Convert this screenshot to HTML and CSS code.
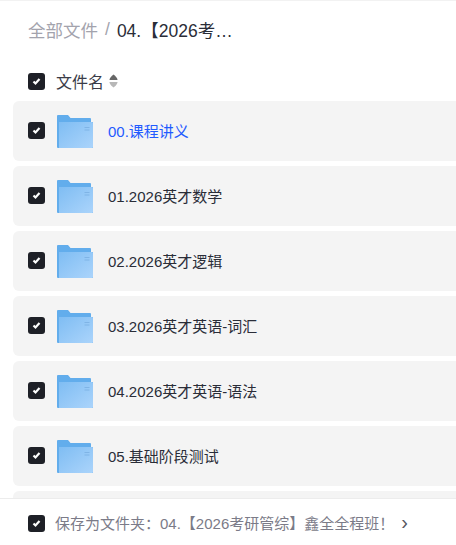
FILE: index.html
```html
<!DOCTYPE html>
<html lang="zh-CN">
<head>
  <meta charset="UTF-8" />
  <meta name="viewport" content="width=device-width, initial-scale=1.0" />
  <title>保存为文件夹</title>
  <link rel="stylesheet" href="styles.css">
</head>
<body>

<svg width="0" height="0" class="defs">
  <defs>
    <linearGradient id="folderFront" x1="0" y1="0" x2="1" y2="1">
      <stop offset="0" stop-color="#7fbdf3" />
      <stop offset="1" stop-color="#abd4fb" />
    </linearGradient>
    <symbol id="folder" viewBox="0 0 36 33">
      <path d="M0 1a1 1 0 0 1 1-1h10l2.500 3H33a1 1 0 0 1 1 1v3H36v26H1a1 1 0 0 1-1-1z" fill="#62adec" />
      <path d="M2 7h33a1 1 0 0 1 1 1v24a1 1 0 0 1-1 1H2z" fill="url(#folderFront)" />
      <path d="M27.500 12.500h5M27.500 15h5" stroke="#7fb4e6" stroke-width="1" />
    </symbol>
    <symbol id="tick" viewBox="0 0 17 17">
      <rect width="17" height="17" rx="3" fill="#1e2027" />
      <path d="M5.500 8.500l2 2 4-4.500" fill="none" stroke="#fff" stroke-width="2.200" />
    </symbol>
  </defs>
</svg>

<div class="topline"></div>

<nav class="crumbs">
  <span class="crumb-root">全部文件</span>
  <span class="crumb-sep">/</span>
  <span class="crumb-current">04.【2026考…</span>
</nav>

<div class="list-head">
  <svg class="check"><use href="#tick" /></svg>
  <span class="head-name">文件名</span>
  <svg class="sort" width="9" height="14" viewBox="0 0 9 14">
    <path d="M4.500 0.500C6 1.500 8 3.500 8.500 5.500a.5.5 0 0 1-.5.500H1a.5.5 0 0 1-.5-.500C1 3.500 3 1.500 4.500 0.500z" fill="#666" />
    <path d="M4.500 13.500C6 12.500 8 10.500 8.500 8.500a.5.5 0 0 0-.5-.500H1a.5.5 0 0 0-.5.500C1 10.500 3 12.500 4.500 13.500z" fill="#b8b8b8" />
  </svg>
</div>

<main class="list">
  <div class="row">
    <svg class="check"><use href="#tick" /></svg>
    <svg class="folder"><use href="#folder" /></svg>
    <span class="name name-active">00.课程讲义</span>
  </div>
  <div class="row">
    <svg class="check"><use href="#tick" /></svg>
    <svg class="folder"><use href="#folder" /></svg>
    <span class="name">01.2026英才数学</span>
  </div>
  <div class="row">
    <svg class="check"><use href="#tick" /></svg>
    <svg class="folder"><use href="#folder" /></svg>
    <span class="name">02.2026英才逻辑</span>
  </div>
  <div class="row">
    <svg class="check"><use href="#tick" /></svg>
    <svg class="folder"><use href="#folder" /></svg>
    <span class="name">03.2026英才英语-词汇</span>
  </div>
  <div class="row">
    <svg class="check"><use href="#tick" /></svg>
    <svg class="folder"><use href="#folder" /></svg>
    <span class="name">04.2026英才英语-语法</span>
  </div>
  <div class="row">
    <svg class="check"><use href="#tick" /></svg>
    <svg class="folder"><use href="#folder" /></svg>
    <span class="name">05.基础阶段测试</span>
  </div>
  <div class="row"></div>
</main>

<footer class="save-bar">
  <svg class="check"><use href="#tick" /></svg>
  <span class="save-text">保存为文件夹：04.【2026考研管综】鑫全全程班！</span>
  <span class="save-arrow">›</span>
</footer>

</body>
</html>
```

FILE: styles.css
```css
html, body {
  height: 100%;
}
body {
  margin: 0;
  display: flex;
  flex-direction: column;
  overflow: hidden;
  background: #fff;
  color: #2a2d38;
  font-family: 'Liberation Sans', 'Noto Sans CJK SC', sans-serif;
}
.defs {
  position: absolute;
}
.topline {
  height: 1px;
  flex: none;
  background: #f2f2f2;
}

/* 面包屑 */
.crumbs {
  flex: none;
  height: 56px;
  padding-left: 28px;
  display: flex;
  align-items: center;
  font-size: 17.5px;
}
.crumb-root {
  color: #a3a3ad;
}
.crumb-sep {
  margin: 0 7px;
  color: #a3a3ad;
}
.crumb-current {
  color: #2a2d38;
}

/* 表头 */
.list-head {
  flex: none;
  height: 44px;
  box-sizing: border-box;
  padding: 4px 0 0 28px;
  display: flex;
  align-items: center;
}
.check {
  width: 17px;
  height: 17px;
  flex: none;
}
.head-name {
  margin-left: 11px;
  font-size: 16px;
  color: #3a3c48;
}
.sort {
  margin-left: 5px;
  flex: none;
}

/* 文件列表 */
.list {
  flex: 1;
  min-height: 0;
  overflow: hidden;
  padding-left: 13px;
  display: flex;
  flex-direction: column;
  gap: 5px;
}
.row {
  flex: none;
  height: 60px;
  margin-right: -8px;
  padding-left: 15px;
  display: flex;
  align-items: center;
  background: #f4f4f4;
  border-radius: 6px;
}
.row .check {
  margin-bottom: 2px;
}
.folder {
  width: 36px;
  height: 33px;
  margin: 1px 0 0 12px;
  flex: none;
}
.name {
  margin: 0 0 2px 15px;
  font-size: 15px;
  color: #2a2d38;
}
.name-active {
  color: #1f5bff;
}

/* 底部保存 */
.save-bar {
  flex: none;
  height: 46px;
  padding-left: 28px;
  display: flex;
  align-items: center;
  border-top: 1px solid #ececec;
  background: #fff;
}
.save-bar .check {
  margin-top: 2px;
}
.save-text {
  margin-left: 10px;
  font-size: 15px;
  color: #7b7b88;
}
.save-arrow {
  margin-left: 7px;
  font-size: 20px;
  color: #55565f;
}
```
